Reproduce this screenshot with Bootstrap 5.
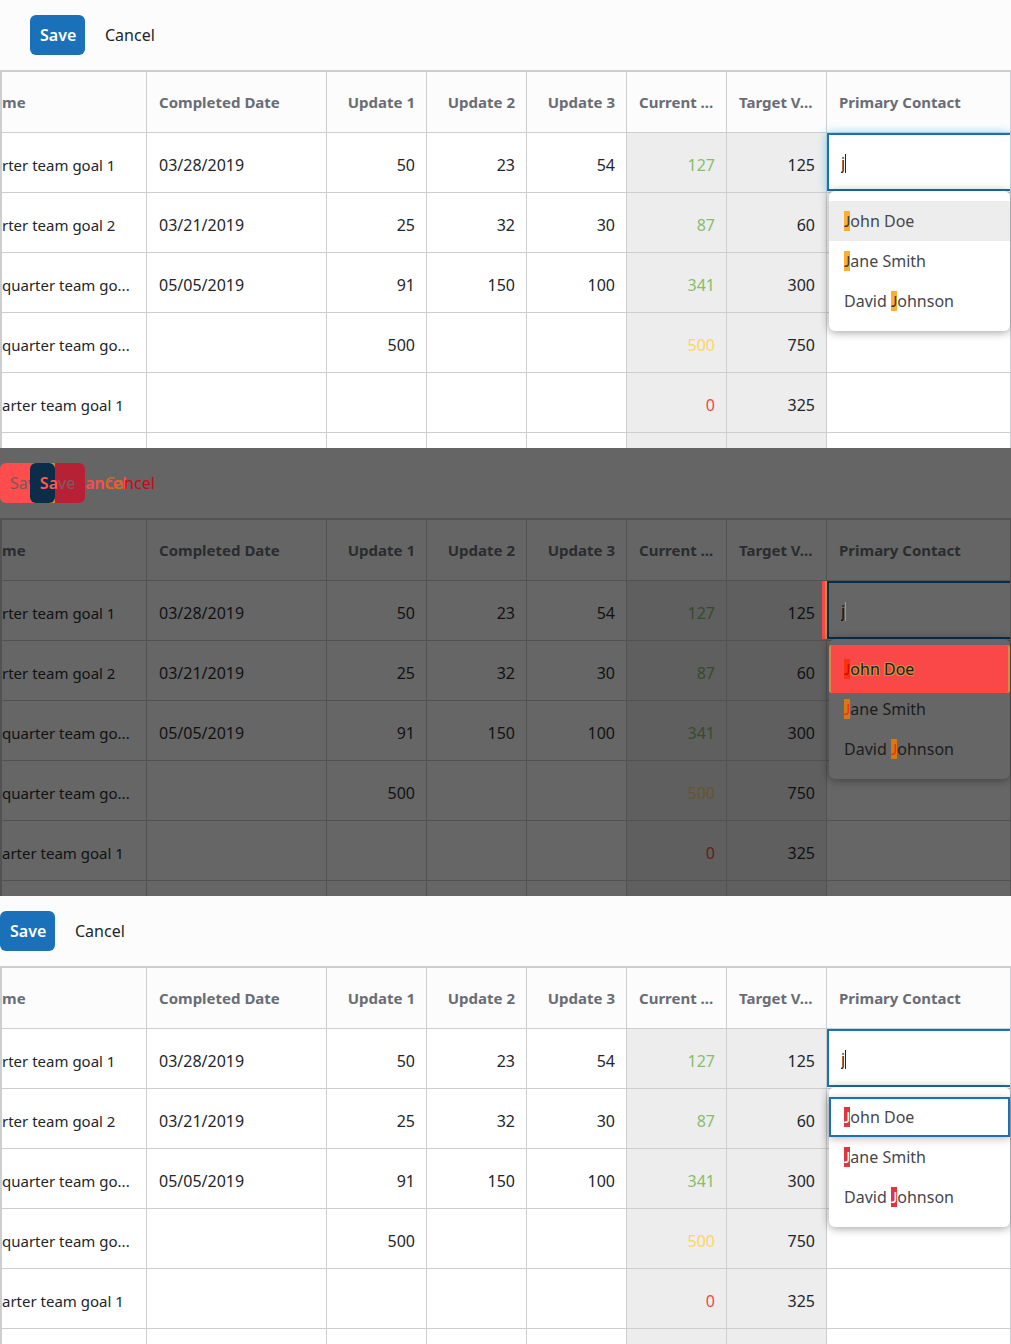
<!DOCTYPE html>
<html lang="en">
<head>
<meta charset="utf-8">
<meta name="viewport" content="width=device-width, initial-scale=1">
<title>Team goals</title>
<link href="https://cdn.jsdelivr.net/npm/bootstrap@5.3.0/dist/css/bootstrap.min.css" rel="stylesheet">
<style>
body{font-family:"Noto Sans","Open Sans",sans-serif;font-size:16px;line-height:24px;overflow-x:hidden}
.goal-panel{--surface:#fcfcfc;--cell:#fff;--calc:#ededed;--line:#cdced0;--ink:#23262a;--head:#6a6d75;--good:#87bd6b;--warn:#fdd663;--bad:#f5483f;--accent:#1b70ba;--menu:#fff;--menu-ink:#45474b;--hit:#fbaf34;--hit-ink:#3f3a30;background:var(--surface);color:var(--ink);overflow:hidden}
.panel-diff{--surface:#656565;--cell:#666;--calc:#5f5f5f;--line:#525253;--ink:#111213;--head:#2a2c2f;--good:#364c2b;--warn:#665628;--bad:#621d19;--accent:#0b2d4a;--menu:#666;--menu-ink:#1c1c1d;--hit:#d6790e;--hit-ink:#ff2a10}
.panel-after{--hit:#dc3741;--hit-ink:#fff}
.tool-strip{padding:15px 0}
.tool-inset{padding-left:30px}
.act{height:40px;padding:0 10px;border:0;border-radius:6px;background:none;color:var(--ink);line-height:24px}
.act-save{width:55px;background:var(--accent);color:#fff;font-weight:600}
.act-cancel{margin-left:10px}
.goal-grid{table-layout:fixed;border-collapse:separate;border-spacing:0;width:100%;color:inherit;border-top:2px solid var(--line);border-left:2px solid var(--line)}
.goal-grid th,.goal-grid td{height:60px;padding:4px 12px 0;border:0 solid var(--line);border-width:0 1px 1px 0;vertical-align:middle;white-space:nowrap;overflow:hidden;background:var(--cell);color:var(--ink);text-align:right}
.goal-grid th{height:61px;background:var(--surface);color:var(--head);font-size:15px;font-weight:700;padding-top:0}
.goal-grid .txt{text-align:left}
.goal-grid td:first-child,.goal-grid th:first-child{text-align:left;padding-left:0}
.goal-grid td:first-child{font-size:15px}
.goal-grid td:nth-child(n+3),.goal-grid th:nth-child(n+3){padding-right:11px}
.goal-grid td:nth-child(6),.goal-grid td:nth-child(7){background:var(--calc)}
.goal-grid .peek td{height:15px;padding:0;border-bottom:0}
.goal-grid .good{color:var(--good)}
.goal-grid .warn{color:var(--warn)}
.goal-grid .bad{color:var(--bad)}
.goal-grid td.edit{position:relative;padding:0;overflow:visible;vertical-align:top;text-align:left}
.edit-box{display:block;width:100%;height:58px;padding:2px 11px 0 12px;border:2px solid var(--accent);border-right:0;background:var(--cell);color:var(--ink);border-radius:0;outline:0}
.panel-before .edit-box{box-shadow:-1px 0 9px #8fd0e8}
.panel-diff .edit-box{box-shadow:-2px 0 0 #c98a3c,-5px 0 0 #f9474a}
.caret{position:absolute;left:18px;top:21px;width:1px;height:19px;background:var(--ink)}
.panel-diff .caret{background:#d08a44}
.pick-menu{position:absolute;z-index:2;top:58px;left:2px;right:0;padding:10px 0;margin:0;list-style:none;background:var(--menu);border-radius:6px;box-shadow:0 1px 10px rgba(0,0,0,.4);color:var(--menu-ink)}
.pick{display:block;width:100%;height:40px;padding:0 15px;border:0;background:none;color:inherit;text-align:left;line-height:40px}
.hit{background:var(--hit);color:var(--hit-ink);display:inline-block;font-family:Lato,"Noto Sans",sans-serif;font-size:15px;line-height:20px;height:20px}
.panel-before .chosen{background:#ededed}
.panel-after .chosen{border:2px solid var(--accent);padding:0 13px;line-height:36px;box-shadow:0 2px 8px rgba(0,0,0,.25)}
.panel-diff .pick-menu{padding:6px 0 10px}
.panel-diff .chosen{height:48px;line-height:48px;margin-bottom:-4px;background:#fa4747;border:0 solid #d58a45;border-width:0 2px;padding:0 13px;border-radius:3px;text-shadow:1px 1px 0 #d58a45,-1px -1px 0 #d58a45,1px -1px 0 #d58a45,-1px 1px 0 #d58a45,0 0 2px #d58a45}
.panel-diff .chosen .hit{background:#ff3010;color:#d00800;text-shadow:none}
.layers{display:grid;position:relative}
.layers>div{grid-area:1/1}
.under .act-save{background:#ff4c4c;color:#77595a;font-weight:400}
.under .act-cancel{color:#ff4c4c;font-weight:600}
.over .act-save{background:linear-gradient(90deg,#c98a3c 25px,#b72135 25px);color:#ff5a4e;padding:0;position:relative}
.over .act-save::before{content:"";position:absolute;inset:0 auto 0 0;width:25px;border-radius:6px;background:var(--accent)}
.over .act-save span{position:relative}
.over .act-save .dim{color:#805b60;font-weight:400}
.over .act-cancel{color:#c90814}
.over .act-cancel span{color:#c17819}
</style>
</head>
<body>
<main>
<section class="goal-panel panel-before" aria-label="Before">
<div class="tool-strip tool-inset d-flex"><button type="button" class="act act-save">Save</button><button type="button" class="act act-cancel">Cancel</button></div>
<table class="goal-grid">
<colgroup><col style="width:145px"><col style="width:180px"><col style="width:100px"><col style="width:100px"><col style="width:100px"><col style="width:100px"><col style="width:100px"><col></colgroup>
<thead><tr><th>me</th><th class="txt">Completed Date</th><th>Update 1</th><th>Update 2</th><th>Update 3</th><th class="txt">Current ...</th><th class="txt">Target V...</th><th class="txt">Primary Contact</th></tr></thead>
<tbody>
<tr><td>rter team goal 1</td><td class="txt">03/28/2019</td><td>50</td><td>23</td><td>54</td><td class="good">127</td><td>125</td><td class="edit"><input class="edit-box" type="text" value="j" aria-label="Primary Contact"><span class="caret"></span>
<ul class="pick-menu"><li><button type="button" class="pick chosen"><span class="hit">J</span>ohn Doe</button></li><li><button type="button" class="pick"><span class="hit">J</span>ane Smith</button></li><li><button type="button" class="pick">David <span class="hit">J</span>ohnson</button></li></ul></td></tr>
<tr><td>rter team goal 2</td><td class="txt">03/21/2019</td><td>25</td><td>32</td><td>30</td><td class="good">87</td><td>60</td><td></td></tr>
<tr><td>quarter team go...</td><td class="txt">05/05/2019</td><td>91</td><td>150</td><td>100</td><td class="good">341</td><td>300</td><td></td></tr>
<tr><td>quarter team go...</td><td></td><td>500</td><td></td><td></td><td class="warn">500</td><td>750</td><td></td></tr>
<tr><td>arter team goal 1</td><td></td><td></td><td></td><td></td><td class="bad">0</td><td>325</td><td></td></tr>
<tr class="peek"><td></td><td></td><td></td><td></td><td></td><td></td><td></td><td></td></tr>
</tbody></table>
</section>

<section class="goal-panel panel-diff" aria-label="Difference">
<div class="tool-strip layers">
<div class="under d-flex"><button type="button" class="act act-save">Save</button><button type="button" class="act act-cancel">Cancel</button></div>
<div class="over tool-inset d-flex"><button type="button" class="act act-save"><span>Sa</span><span class="dim">ve</span></button><button type="button" class="act act-cancel"><span>Ca</span>ncel</button></div>
</div>
<table class="goal-grid">
<colgroup><col style="width:145px"><col style="width:180px"><col style="width:100px"><col style="width:100px"><col style="width:100px"><col style="width:100px"><col style="width:100px"><col></colgroup>
<thead><tr><th>me</th><th class="txt">Completed Date</th><th>Update 1</th><th>Update 2</th><th>Update 3</th><th class="txt">Current ...</th><th class="txt">Target V...</th><th class="txt">Primary Contact</th></tr></thead>
<tbody>
<tr><td>rter team goal 1</td><td class="txt">03/28/2019</td><td>50</td><td>23</td><td>54</td><td class="good">127</td><td>125</td><td class="edit"><input class="edit-box" type="text" value="j" aria-label="Primary Contact"><span class="caret"></span>
<ul class="pick-menu"><li><button type="button" class="pick chosen"><span class="hit">J</span>ohn Doe</button></li><li><button type="button" class="pick"><span class="hit">J</span>ane Smith</button></li><li><button type="button" class="pick">David <span class="hit">J</span>ohnson</button></li></ul></td></tr>
<tr><td>rter team goal 2</td><td class="txt">03/21/2019</td><td>25</td><td>32</td><td>30</td><td class="good">87</td><td>60</td><td></td></tr>
<tr><td>quarter team go...</td><td class="txt">05/05/2019</td><td>91</td><td>150</td><td>100</td><td class="good">341</td><td>300</td><td></td></tr>
<tr><td>quarter team go...</td><td></td><td>500</td><td></td><td></td><td class="warn">500</td><td>750</td><td></td></tr>
<tr><td>arter team goal 1</td><td></td><td></td><td></td><td></td><td class="bad">0</td><td>325</td><td></td></tr>
<tr class="peek"><td></td><td></td><td></td><td></td><td></td><td></td><td></td><td></td></tr>
</tbody></table>
</section>

<section class="goal-panel panel-after" aria-label="After">
<div class="tool-strip d-flex"><button type="button" class="act act-save">Save</button><button type="button" class="act act-cancel">Cancel</button></div>
<table class="goal-grid">
<colgroup><col style="width:145px"><col style="width:180px"><col style="width:100px"><col style="width:100px"><col style="width:100px"><col style="width:100px"><col style="width:100px"><col></colgroup>
<thead><tr><th>me</th><th class="txt">Completed Date</th><th>Update 1</th><th>Update 2</th><th>Update 3</th><th class="txt">Current ...</th><th class="txt">Target V...</th><th class="txt">Primary Contact</th></tr></thead>
<tbody>
<tr><td>rter team goal 1</td><td class="txt">03/28/2019</td><td>50</td><td>23</td><td>54</td><td class="good">127</td><td>125</td><td class="edit"><input class="edit-box" type="text" value="j" aria-label="Primary Contact"><span class="caret"></span>
<ul class="pick-menu"><li><button type="button" class="pick chosen"><span class="hit">J</span>ohn Doe</button></li><li><button type="button" class="pick"><span class="hit">J</span>ane Smith</button></li><li><button type="button" class="pick">David <span class="hit">J</span>ohnson</button></li></ul></td></tr>
<tr><td>rter team goal 2</td><td class="txt">03/21/2019</td><td>25</td><td>32</td><td>30</td><td class="good">87</td><td>60</td><td></td></tr>
<tr><td>quarter team go...</td><td class="txt">05/05/2019</td><td>91</td><td>150</td><td>100</td><td class="good">341</td><td>300</td><td></td></tr>
<tr><td>quarter team go...</td><td></td><td>500</td><td></td><td></td><td class="warn">500</td><td>750</td><td></td></tr>
<tr><td>arter team goal 1</td><td></td><td></td><td></td><td></td><td class="bad">0</td><td>325</td><td></td></tr>
<tr class="peek"><td></td><td></td><td></td><td></td><td></td><td></td><td></td><td></td></tr>
</tbody></table>
</section>
</main>
<script src="https://cdn.jsdelivr.net/npm/bootstrap@5.3.0/dist/js/bootstrap.bundle.min.js"></script>
</body>
</html>
